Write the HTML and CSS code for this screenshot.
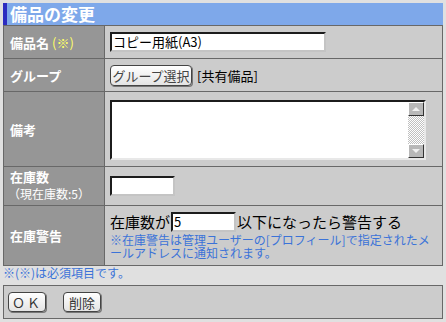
FILE: index.html
```html
<!DOCTYPE html>
<html lang="ja">
<head>
<meta charset="utf-8">
<link rel="stylesheet" href="styles.css">
</head>
<body>
<div class="page">
  <div class="title">備品の変更</div>
  <div class="form">
    <div class="label">備品名<span class="req">(※)</span></div>
    <div class="value"><div class="input name-input">コピー用紙(A3)</div></div>

    <div class="label">グループ</div>
    <div class="value"><span class="btn group-btn">グループ選択</span><span class="group-name">[共有備品]</span></div>

    <div class="label">備考</div>
    <div class="value">
      <div class="textarea">
        <div class="ta-body"></div>
        <div class="scrollbar">
          <div class="sb-btn"><svg width="12" height="8" viewBox="0 0 12 8"><path d="M2 6 L6 2 L10 6 Z" fill="#f0f0f0"/></svg></div>
          <div class="sb-track"></div>
          <div class="sb-btn"><svg width="12" height="8" viewBox="0 0 12 8"><path d="M2 2 L10 2 L6 6 Z" fill="#f0f0f0"/></svg></div>
        </div>
      </div>
    </div>

    <div class="label stock-label"><div class="lbl-main">在庫数</div><div class="lbl-sub">（現在庫数:5）</div></div>
    <div class="value"><div class="input stock-input"></div></div>

    <div class="label">在庫警告</div>
    <div class="value warn">
      <div class="warn-line"><span>在庫数が</span><div class="input warn-input">5</div><span>以下になったら警告する</span></div>
      <div class="warn-note">※在庫警告は管理ユーザーの[プロフィール]で指定されたメールアドレスに通知されます。</div>
    </div>
  </div>
  <div class="footnote">※(※)は必須項目です。</div>
  <div class="actions">
    <span class="btn ok-btn">ＯＫ</span>
    <span class="btn del-btn">削除</span>
  </div>
</div>
</body>
</html>
```

FILE: styles.css
```css
html, body {
  margin: 0;
  padding: 0;
  background: #e0e0e0;
}
body {
  font-family: "Noto Sans CJK JP", "Noto Sans", sans-serif;
  font-size: 13px;
  color: #000;
}
.page {
  padding: 3px 0 0 3px;
  width: 440px;
}
.title {
  height: 22px;
  background: #7ea8ea;
  border-left: 4px solid #2c2cc0;
  color: #fff;
  font-weight: bold;
  font-size: 17px;
  line-height: 22px;
  padding-left: 3px;
}
.form {
  display: grid;
  grid-template-columns: 100px 1fr;
  grid-template-rows: 32px 32px 74px 38px 59px;
  gap: 1px;
  padding: 1px;
  background: #686868;
}
.label {
  background: #969696;
  color: #fff;
  font-weight: bold;
  font-size: 13px;
  display: flex;
  align-items: center;
  padding-left: 6px;
}
.req {
  color: #ffff66;
  font-weight: normal;
  margin-left: 3px;
}
.stock-label {
  flex-direction: column;
  align-items: flex-start;
  justify-content: center;
}
.lbl-main {
  line-height: 19px;
  height: 19px;
  margin-top: -2px;
}
.lbl-sub {
  font-weight: normal;
  font-size: 12px;
  line-height: 18px;
  height: 18px;
  margin-left: -2px;
  margin-top: -1px;
}
.value {
  background: #cccccc;
  display: flex;
  align-items: center;
  padding-left: 5px;
}
.input {
  box-sizing: border-box;
  background: #fff;
  border-style: solid;
  border-width: 2px;
  border-color: #1c1c1c #c4c4c4 #c4c4c4 #1c1c1c;
  height: 20px;
  font-size: 13px;
  line-height: 16px;
  padding-left: 1px;
}
.name-input {
  width: 216px;
}
.btn {
  box-sizing: border-box;
  display: inline-flex;
  align-items: center;
  justify-content: center;
  background: linear-gradient(#ffffff, #e4e4e4);
  border: 1px solid #444;
  border-radius: 4px;
  box-shadow: 1px 1px 0 #777;
  color: #333;
  font-size: 13px;
}
.group-btn {
  width: 82px;
  height: 21px;
  color: #444;
}
.group-name {
  margin-left: 5px;
}
.textarea {
  box-sizing: border-box;
  width: 316px;
  height: 60px;
  display: flex;
  border-style: solid;
  border-width: 2px;
  border-color: #1c1c1c #e8e8e8 #e8e8e8 #1c1c1c;
  margin-top: 1px;
}
.ta-body {
  flex: 1;
  background: #fff;
}
.scrollbar {
  width: 16px;
  display: flex;
  flex-direction: column;
  background: #fff;
}
.sb-btn {
  box-sizing: border-box;
  height: 14px;
  background: #b8b8b8;
  border-style: solid;
  border-width: 1px;
  border-color: #fff #333 #333 #fff;
  display: flex;
  align-items: center;
  justify-content: center;
}
.sb-track {
  flex: 1;
  background-color: #fff;
  background-image: repeating-conic-gradient(#c0c0c0 0 25%, #ffffff 0 50%);
  background-size: 2px 2px;
}
.stock-input {
  width: 65px;
}
.warn {
  flex-direction: column;
  align-items: flex-start;
  justify-content: center;
}
.warn-line {
  display: flex;
  align-items: center;
  font-size: 15px;
  line-height: 20px;
}
.warn-input {
  width: 65px;
  margin: 0 1px;
}
.warn-note {
  color: #3b73d8;
  font-size: 12px;
  line-height: 13px;
  width: 325px;
  margin-top: 1px;
}
.footnote {
  color: #3b73d8;
  font-size: 12px;
  height: 19px;
  line-height: 14px;
}
.actions {
  box-sizing: border-box;
  height: 34px;
  background: #cccccc;
  border: 1px solid #686868;
  display: flex;
  align-items: center;
  gap: 17px;
  padding-left: 4px;
}
.ok-btn {
  width: 38px;
  height: 20px;
  letter-spacing: 2px;
}
.del-btn {
  width: 38px;
  height: 20px;
}
```
